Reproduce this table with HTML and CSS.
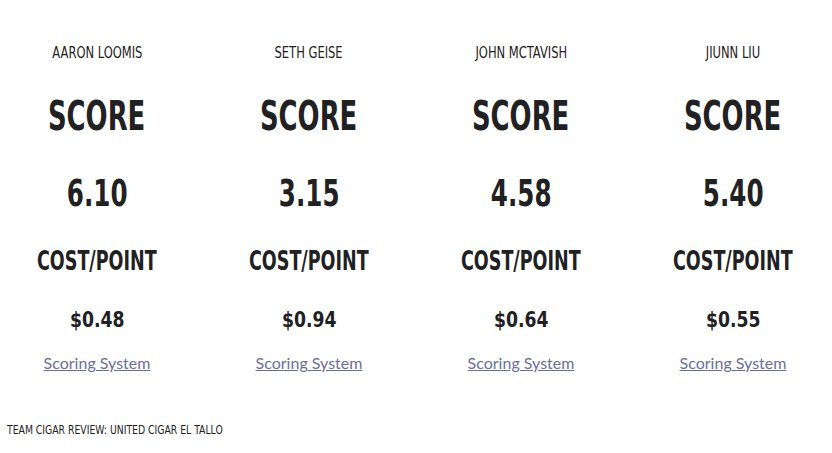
FILE: index.html
```html
<!DOCTYPE html>
<html lang="en">
<head>
<meta charset="utf-8">
<title>Team Cigar Review: United Cigar El Tallo</title>
<link rel="stylesheet" href="styles.css">
</head>
<body>
<main class="scores">
  <section class="reviewer">
    <div class="name">AARON LOOMIS</div>
    <div class="label">SCORE</div>
    <div class="value">6.10</div>
    <div class="sub">COST/POINT</div>
    <div class="price">$0.48</div>
    <a class="link" href="#">Scoring System</a>
  </section>
  <section class="reviewer">
    <div class="name">SETH GEISE</div>
    <div class="label">SCORE</div>
    <div class="value">3.15</div>
    <div class="sub">COST/POINT</div>
    <div class="price">$0.94</div>
    <a class="link" href="#">Scoring System</a>
  </section>
  <section class="reviewer">
    <div class="name">JOHN MCTAVISH</div>
    <div class="label">SCORE</div>
    <div class="value">4.58</div>
    <div class="sub">COST/POINT</div>
    <div class="price">$0.64</div>
    <a class="link" href="#">Scoring System</a>
  </section>
  <section class="reviewer">
    <div class="name">JIUNN LIU</div>
    <div class="label">SCORE</div>
    <div class="value">5.40</div>
    <div class="sub">COST/POINT</div>
    <div class="price">$0.55</div>
    <a class="link" href="#">Scoring System</a>
  </section>
</main>
<footer class="caption"><span class="caption-text">TEAM CIGAR REVIEW: UNITED CIGAR EL TALLO</span></footer>
</body>
</html>
```
FILE: styles.css
```css
html, body {
  margin: 0;
  padding: 0;
  background: #ffffff;
}
body {
  font-family: "DejaVu Sans Condensed", "DejaVu Sans", sans-serif;
  font-stretch: condensed;
  color: #1f2123;
}
.scores {
  display: grid;
  grid-template-columns: repeat(4, 178px);
  column-gap: 34px;
  padding-left: 8px;
}
.reviewer {
  display: flex;
  flex-direction: column;
  align-items: center;
  text-align: center;
}
.name,
.label,
.value,
.sub,
.price {
  transform-origin: center;
  white-space: nowrap;
}
.name {
  font-size: 16px;
  line-height: 20px;
  margin-top: 43px;
  font-weight: 400;
  transform: scaleX(0.8);
}
.label {
  font-size: 40px;
  line-height: 48px;
  margin-top: 29px;
  font-weight: 700;
  transform: scaleX(0.72);
}
.value {
  font-size: 38px;
  line-height: 46px;
  margin-top: 30px;
  font-weight: 700;
  transform: scaleX(0.72);
}
.sub {
  font-size: 26px;
  line-height: 32px;
  margin-top: 29px;
  font-weight: 700;
  transform: scaleX(0.75);
}
.price {
  font-size: 22px;
  line-height: 28px;
  margin-top: 29px;
  font-weight: 700;
  transform: scaleX(0.87);
}
.link {
  font-family: Lato, "Liberation Sans", sans-serif;
  font-stretch: normal;
  font-size: 16px;
  line-height: 24px;
  margin-top: 17px;
  color: #6b6f98;
  text-decoration: underline;
}
.caption {
  font-size: 12px;
  line-height: 16px;
  margin-top: 47px;
  padding-left: 7px;
}
.caption-text {
  display: inline-block;
  white-space: nowrap;
  transform: scaleX(0.86);
  transform-origin: left center;
}
```
